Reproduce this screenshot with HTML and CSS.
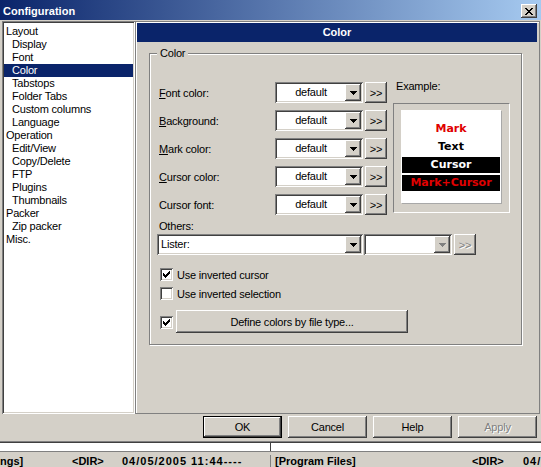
FILE: index.html
```html
<!DOCTYPE html>
<html lang="en">
<head>
<meta charset="utf-8">
<title>Configuration</title>
<link rel="stylesheet" href="styles.css">
</head>
<body>
<div class="screen">
  <div class="dialog">
    <div class="titlebar">
      <span class="title">Configuration</span>
      <span class="close"><svg width="8" height="7" viewBox="0 0 8 7"><path d="M0 0h2v1H0z M6 0h2v1H6z M1 1h2v1H1z M5 1h2v1H5z M2 2h4v1H2z M3 3h2v1H3z M2 4h4v1H2z M1 5h2v1H1z M5 5h2v1H5z M0 6h2v1H0z M6 6h2v1H6z" fill="#000"/></svg></span>
    </div>
    <div class="main">
      <ul class="tree">
        <li class="top">Layout</li>
        <li class="sub">Display</li>
        <li class="sub">Font</li>
        <li class="sub selected">Color</li>
        <li class="sub">Tabstops</li>
        <li class="sub">Folder Tabs</li>
        <li class="sub">Custom columns</li>
        <li class="sub">Language</li>
        <li class="top">Operation</li>
        <li class="sub">Edit/View</li>
        <li class="sub">Copy/Delete</li>
        <li class="sub">FTP</li>
        <li class="sub">Plugins</li>
        <li class="sub">Thumbnails</li>
        <li class="top">Packer</li>
        <li class="sub">Zip packer</li>
        <li class="top">Misc.</li>
      </ul>
      <div class="panel">
        <div class="header">Color</div>
        <div class="group">
          <span class="legend">Color</span>
          <div class="top-area">
            <div class="rows">
              <div class="row">
                <span class="lbl"><u>F</u>ont color:</span>
                <div class="combo"><span class="value">default</span><span class="drop"><svg width="7" height="4" viewBox="0 0 7 4"><path d="M0 0h7v1H0z M1 1h5v1H1z M2 2h3v1H2z M3 3h1v1H3z" fill="#000"/></svg></span></div>
                <div class="btn more">&gt;&gt;</div>
              </div>
              <div class="row">
                <span class="lbl"><u>B</u>ackground:</span>
                <div class="combo"><span class="value">default</span><span class="drop"><svg width="7" height="4" viewBox="0 0 7 4"><path d="M0 0h7v1H0z M1 1h5v1H1z M2 2h3v1H2z M3 3h1v1H3z" fill="#000"/></svg></span></div>
                <div class="btn more">&gt;&gt;</div>
              </div>
              <div class="row">
                <span class="lbl"><u>M</u>ark color:</span>
                <div class="combo"><span class="value">default</span><span class="drop"><svg width="7" height="4" viewBox="0 0 7 4"><path d="M0 0h7v1H0z M1 1h5v1H1z M2 2h3v1H2z M3 3h1v1H3z" fill="#000"/></svg></span></div>
                <div class="btn more">&gt;&gt;</div>
              </div>
              <div class="row">
                <span class="lbl"><u>C</u>ursor color:</span>
                <div class="combo"><span class="value">default</span><span class="drop"><svg width="7" height="4" viewBox="0 0 7 4"><path d="M0 0h7v1H0z M1 1h5v1H1z M2 2h3v1H2z M3 3h1v1H3z" fill="#000"/></svg></span></div>
                <div class="btn more">&gt;&gt;</div>
              </div>
              <div class="row">
                <span class="lbl">Cursor font:</span>
                <div class="combo"><span class="value">default</span><span class="drop"><svg width="7" height="4" viewBox="0 0 7 4"><path d="M0 0h7v1H0z M1 1h5v1H1z M2 2h3v1H2z M3 3h1v1H3z" fill="#000"/></svg></span></div>
                <div class="btn more">&gt;&gt;</div>
              </div>
            </div>
            <div class="example">
              <div class="example-label">Example:</div>
              <div class="example-frame">
                <div class="example-box">
                  <div class="ex mark">Mark</div>
                  <div class="ex text">Text</div>
                  <div class="ex cursor">Cursor</div>
                  <div class="ex markcursor">Mark+Cursor</div>
                </div>
              </div>
            </div>
          </div>
          <div class="others-label">Others:</div>
          <div class="others-row">
            <div class="combo wide"><span class="value left">Lister:</span><span class="drop"><svg width="7" height="4" viewBox="0 0 7 4"><path d="M0 0h7v1H0z M1 1h5v1H1z M2 2h3v1H2z M3 3h1v1H3z" fill="#000"/></svg></span></div>
            <div class="combo second"><span class="value"></span><span class="drop"><svg width="7" height="4" viewBox="0 0 7 4"><path d="M0 0h7v1H0z M1 1h5v1H1z M2 2h3v1H2z M3 3h1v1H3z" fill="#808080"/></svg></span></div>
            <div class="btn more disabled">&gt;&gt;</div>
          </div>
          <div class="check-row first">
            <span class="checkbox"><svg width="7" height="7" viewBox="0 0 7 7"><path d="M6 0h1v1H6z M5 1h2v1H5z M0 2h1v1H0z M4 2h3v1H4z M0 3h2v1H0z M3 3h3v1H3z M0 4h5v1H0z M1 5h3v1H1z M2 6h1v1H2z" fill="#000"/></svg></span>
            <span>Use inverted cursor</span>
          </div>
          <div class="check-row second">
            <span class="checkbox"></span>
            <span>Use inverted selection</span>
          </div>
          <div class="define-row">
            <span class="checkbox"><svg width="7" height="7" viewBox="0 0 7 7"><path d="M6 0h1v1H6z M5 1h2v1H5z M0 2h1v1H0z M4 2h3v1H4z M0 3h2v1H0z M3 3h3v1H3z M0 4h5v1H0z M1 5h3v1H1z M2 6h1v1H2z" fill="#000"/></svg></span>
            <div class="btn define">Define colors by file type...</div>
          </div>
        </div>
      </div>
    </div>
    <div class="buttons">
      <div class="btn action default">OK</div>
      <div class="btn action">Cancel</div>
      <div class="btn action">Help</div>
      <div class="btn action disabled">Apply</div>
    </div>
  </div>
  <div class="behind">
    <div class="strip"><span class="tick"></span></div>
    <div class="status">
      <div class="pane-left">
        <span>ngs]</span>
        <span>&lt;DIR&gt;</span>
        <span class="date">04/05/2005 11:44----</span>
      </div>
      <div class="pane-right">
        <span>[Program Files]</span>
        <span>&lt;DIR&gt;</span>
        <span class="date">04/</span>
      </div>
    </div>
  </div>
</div>
</body>
</html>
```

FILE: styles.css
```css
* { box-sizing: border-box; margin: 0; padding: 0; }
html, body { width: 541px; height: 467px; overflow: hidden; }
body {
  background: #d4d0c8;
  font-family: "Liberation Sans", Arial, sans-serif;
  font-size: 11px;
  color: #000;
  letter-spacing: -0.2px;
}
.screen { width: 541px; height: 467px; display: flex; flex-direction: column; overflow: hidden; }

.dialog {
  flex: none;
  height: 443px;
  display: flex;
  flex-direction: column;
  background: #d4d0c8;
  border-bottom: 1px solid #404040;
  box-shadow: inset 0 -1px #808080;
}

.titlebar {
  flex: none;
  height: 20px;
  display: flex;
  align-items: flex-start;
  justify-content: space-between;
  padding: 2px 4px 0 3px;
  background: linear-gradient(to right, #0a246a, #a6caf0);
}
.title { color: #fff; font-weight: bold; letter-spacing: 0; line-height: 18px; }
.close {
  width: 16px;
  height: 14px;
  margin-top: 2px;
  display: flex;
  align-items: center;
  justify-content: center;
  background: #d4d0c8;
  box-shadow: inset -1px -1px #404040, inset 1px 1px #fff, inset -2px -2px #808080;
}

.main { flex: none; height: 393px; margin-top: 1px; display: flex; padding-left: 2px; }

.tree {
  list-style: none;
  width: 133px;
  height: 393px;
  background: #fff;
  padding: 4px 2px 2px;
  box-shadow: inset 1px 1px #808080, inset -1px -1px #fff, inset 2px 2px #404040, inset -2px -2px #d4d0c8;
}
.tree li { height: 13px; line-height: 13px; white-space: nowrap; }
.tree .top { padding-left: 2px; }
.tree .sub { padding-left: 8px; }
.tree .selected { background: #0a246a; color: #fff; }

.panel {
  width: 405px;
  height: 393px;
  border: 1px solid #808080;
  box-shadow: inset 1px 1px #fff;
  padding: 1px 2px 0 1px;
}
.header {
  height: 19px;
  line-height: 19px;
  background: #0a246a;
  color: #fff;
  font-weight: bold;
  text-align: center;
  letter-spacing: 0;
}

.group {
  position: relative;
  margin: 11px 0 0 12px;
  width: 373px;
  height: 292px;
  border: 1px solid #808080;
  box-shadow: inset 1px 1px #fff, 1px 1px #fff;
  padding: 28px 0 0 9px;
}
.legend {
  position: absolute;
  left: 7px;
  top: -7px;
  padding: 0 3px;
  line-height: 13px;
  background: #d4d0c8;
}

.top-area { display: flex; align-items: flex-start; }
.rows { display: flex; flex-direction: column; gap: 7px; }
.row { display: flex; align-items: center; height: 21px; }
.lbl { width: 116px; white-space: nowrap; }

.combo {
  width: 88px;
  height: 21px;
  display: flex;
  padding: 2px;
  background: #fff;
  box-shadow: inset 1px 1px #808080, inset -1px -1px #fff, inset 2px 2px #404040, inset -2px -2px #d4d0c8;
}
.combo .value { flex: 1; text-align: center; line-height: 17px; white-space: nowrap; }
.combo .value.left { text-align: left; padding-left: 2px; }
.drop {
  width: 16px;
  height: 17px;
  display: flex;
  align-items: center;
  justify-content: center;
  background: #d4d0c8;
  box-shadow: inset -1px -1px #404040, inset 1px 1px #fff, inset -2px -2px #808080;
}

.btn {
  display: flex;
  align-items: center;
  justify-content: center;
  background: #d4d0c8;
  white-space: nowrap;
  box-shadow: inset -1px -1px #404040, inset 1px 1px #fff, inset -2px -2px #808080;
}
.more { width: 22px; height: 21px; margin-left: 2px; }
.btn.disabled { color: #808080; text-shadow: 1px 1px #fff; }

.example { margin-left: 6px; }
.example-label { line-height: 13px; margin-top: -2px; padding-left: 3px; }
.example-frame {
  margin-top: 10px;
  width: 117px;
  height: 110px;
  border: 1px solid;
  border-color: #808080 #fff #fff #808080;
  padding: 6px 0 0 7px;
}
.example-box {
  width: 100px;
  height: 93px;
  background: #fff;
  box-shadow: 1px 1px #a8a8a8;
  padding: 11px 1px 0;
  display: flex;
  flex-direction: column;
  gap: 2px;
}
.ex {
  height: 16px;
  line-height: 16px;
  text-align: center;
  font-family: "DejaVu Sans", Verdana, sans-serif;
  font-weight: bold;
  font-size: 11px;
  letter-spacing: 0;
  white-space: nowrap;
}
.ex.mark { color: #e00000; }
.ex.text { color: #000; }
.ex.cursor { background: #000; color: #fff; }
.ex.markcursor { background: #000; color: #e00000; }

.others-label { margin-top: 5px; line-height: 13px; }
.others-row { display: flex; height: 21px; margin: 1px 0 0 -2px; }
.combo.wide { width: 206px; }
.combo.second { width: 88px; margin-left: 1px; }

.checkbox {
  flex: none;
  width: 13px;
  height: 13px;
  padding: 3px;
  display: flex;
  background: #fff;
  box-shadow: inset 1px 1px #808080, inset -1px -1px #fff, inset 2px 2px #404040, inset -2px -2px #d4d0c8;
}
.check-row { display: flex; align-items: center; gap: 4px; height: 13px; margin-left: 1px; white-space: nowrap; }
.check-row.first { margin-top: 13px; }
.check-row.second { margin-top: 6px; }
.define-row { display: flex; align-items: flex-start; gap: 3px; margin: 10px 0 0 1px; }
.define-row .checkbox { margin-top: 6px; }
.btn.define { width: 232px; height: 23px; }

.buttons { flex: none; display: flex; justify-content: flex-end; gap: 6px; padding-right: 4px; margin-top: 2px; }
.btn.action { width: 79px; height: 22px; }
.btn.default { border: 1px solid #000; }

.behind { flex: 1; display: flex; flex-direction: column; background: #d4d0c8; }
.strip { flex: none; height: 8px; background: #fff; display: flex; padding-left: 270px; }
.tick { width: 1px; height: 8px; background: #404040; }
.status {
  flex: 1;
  display: flex;
  border-top: 1px solid #808080;
  padding-top: 3px;
  font-weight: bold;
  letter-spacing: 0;
  line-height: 13px;
  white-space: nowrap;
}
.pane-left { width: 270px; display: grid; grid-template-columns: 72px 50px 1fr; overflow: hidden; }
.pane-right { flex: 1; display: grid; grid-template-columns: 197px 51px 1fr; padding-left: 4px; border-left: 1px solid #808080; overflow: hidden; }
.date { letter-spacing: 1px; }
```
